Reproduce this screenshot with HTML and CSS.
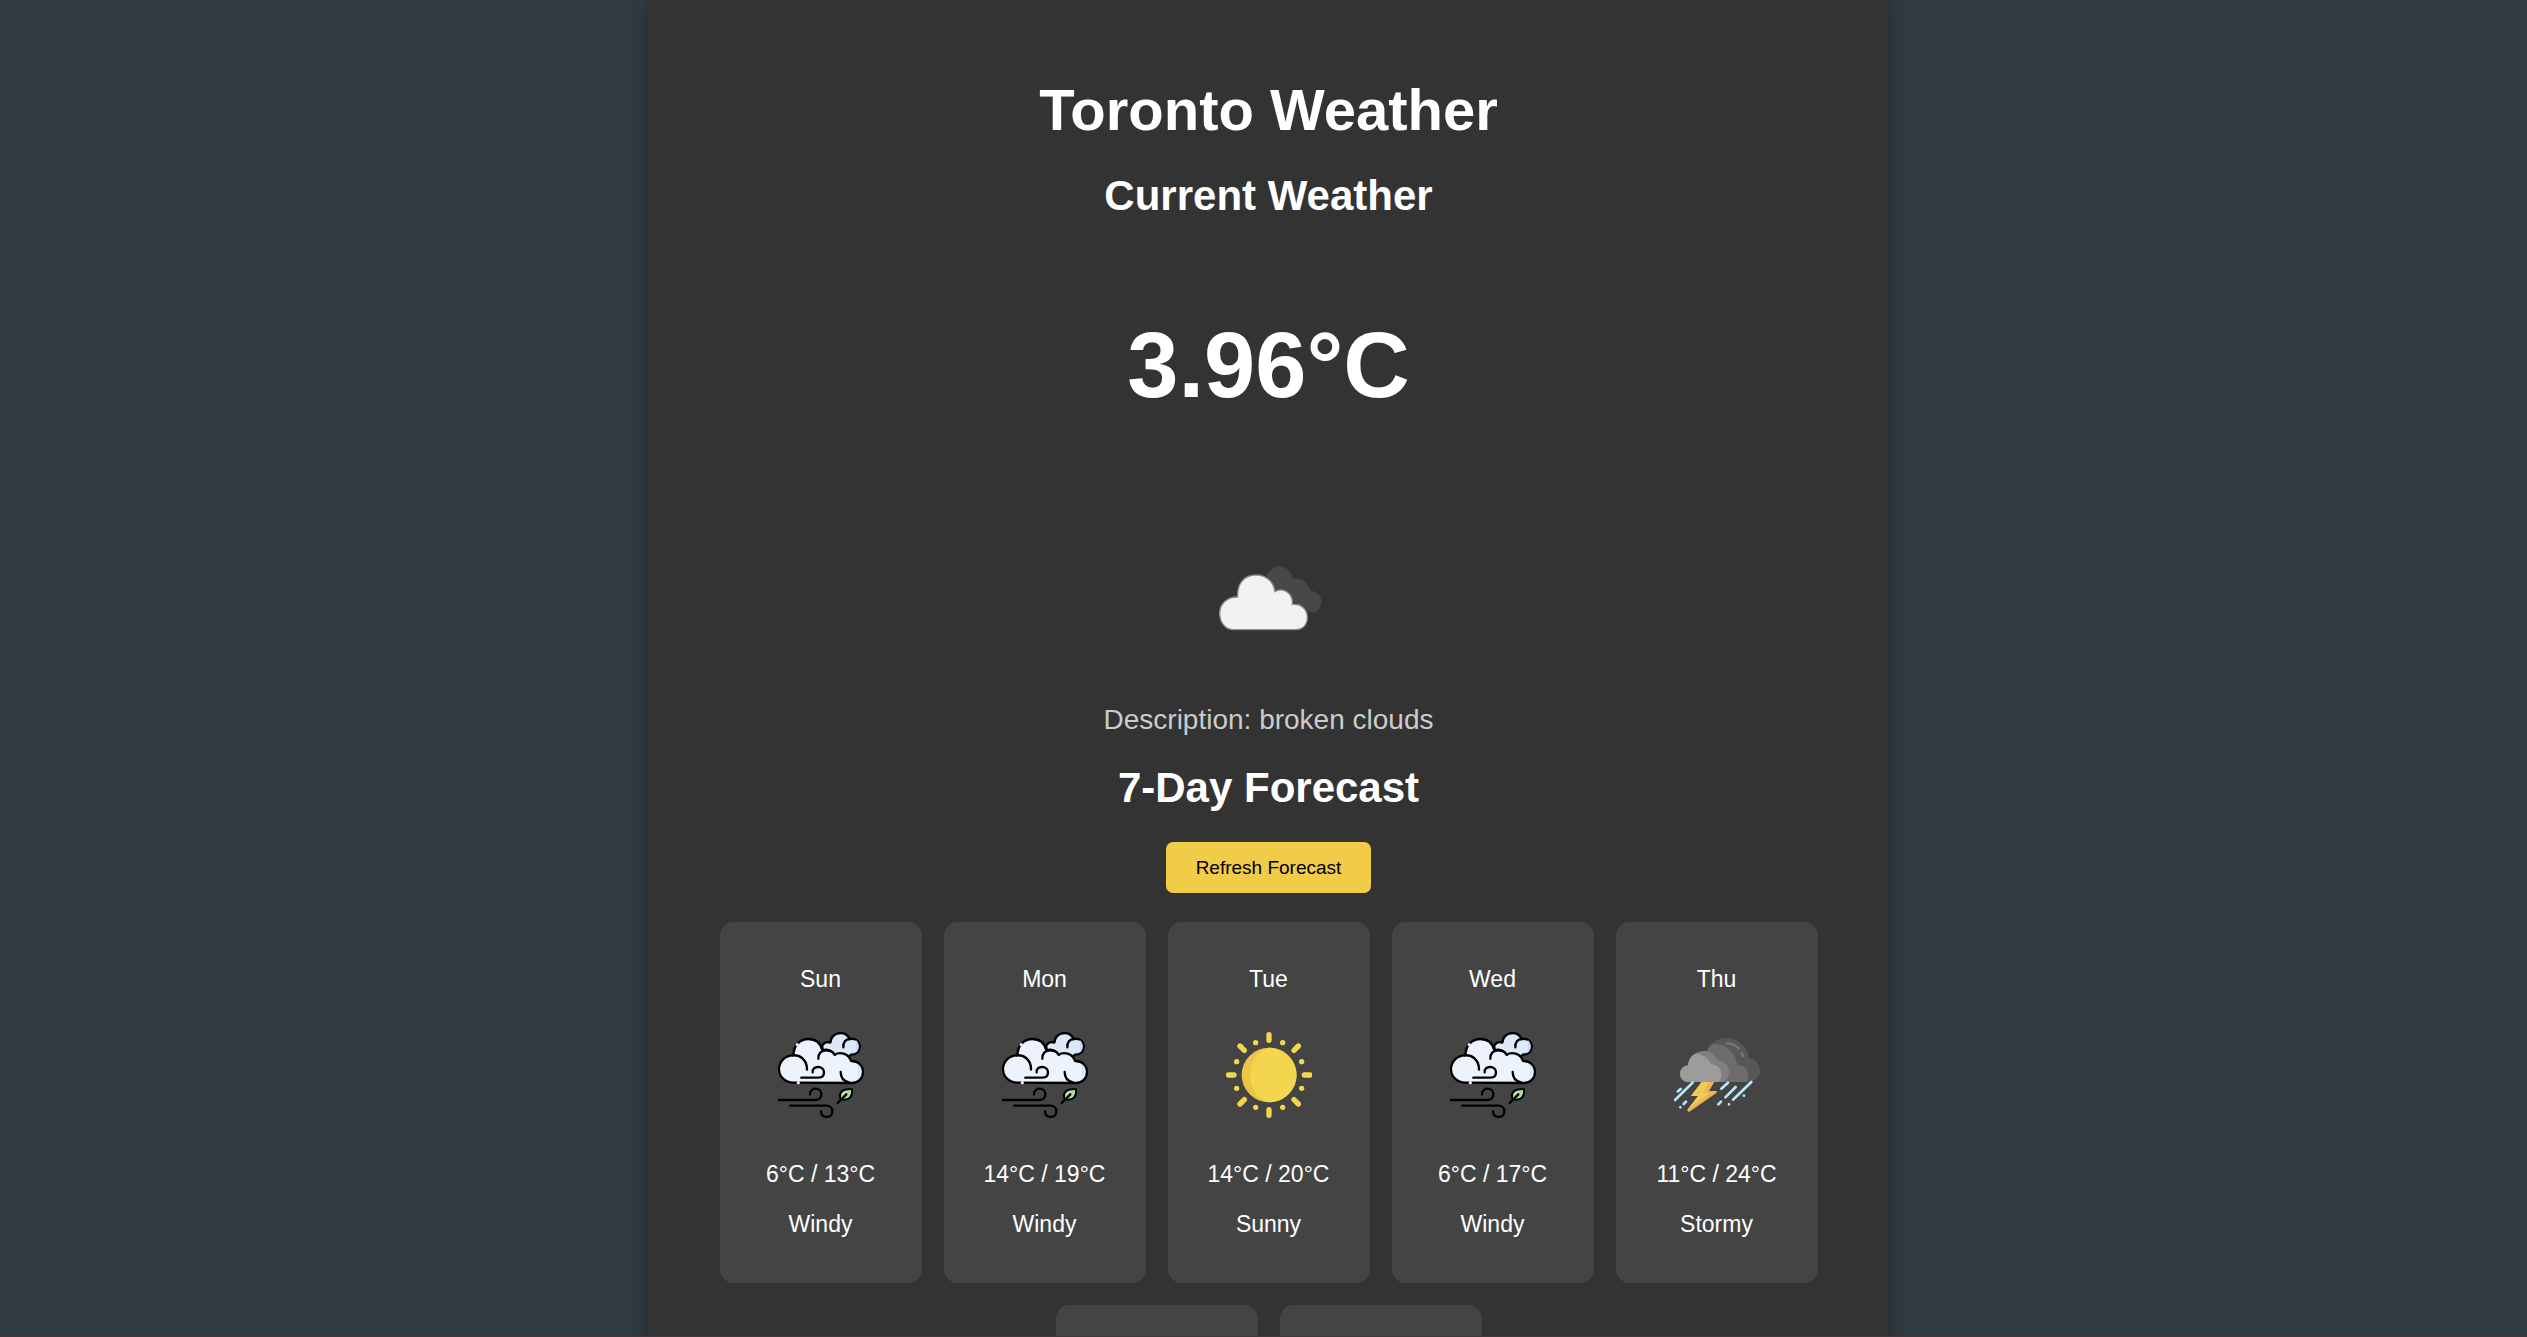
FILE: index.html
```
<!DOCTYPE html>
<html lang="en">
<head>
    <meta charset="UTF-8">
    <meta name="viewport" content="width=device-width, initial-scale=1.0">
    <title>Toronto Weather</title>
    <link rel="stylesheet" href="styles.css">
</head>
<body>
    <!-- Icon definitions -->
    <svg class="icon-defs" aria-hidden="true">
        <symbol id="icon-windy" viewBox="84 63 258 258">
            <g stroke="#000" stroke-width="7" stroke-linecap="round" stroke-linejoin="round" fill="none">
                <path fill="#dfe8f8" d="M216 107C219 95 230 91 241 95C243 76 257 66 271 66C285 66 294 73 299 84C316 80 329 92 329 107C329 122 317 131 303 131L280 150H230Z"/>
                <path stroke="none" fill="#c4d6f8" d="M316 86C330 95 330 118 315 127C321 113 321 100 316 86Z"/>
                <path d="M280 109C279 94 287 84 300 84"/>
                <path fill="#ecf3fe" d="M130 215C105 215 87 197 87 174C87 151 105 133 130 133C131 103 150 84 175 84C197 84 212 97 217 118C231 113 247 119 254 131C272 120 297 130 303 150C323 149 339 163 339 183C339 203 325 215 306 216Z"/>
                <path stroke="none" fill="#d5e2fa" d="M318 156C336 166 337 199 318 209C329 193 329 173 318 156Z"/>
                <path d="M128 133C154 131 172 151 171 176"/>
                <path d="M205 143C205 127 214 118 229 118C241 118 249 122 254 131"/>
                <path d="M272 183C272 199 281 211 297 214"/>
                <path d="M188 184C187 174 194 168 204 168C215 168 222 175 222 184C222 194 216 200 206 200H154"/>
                <path d="M87 267H197C208 267 214 259 214 250C214 240 207 233 197 233C187 233 180 240 180 250"/>
                <path d="M121 284H230C240 284 247 291 247 301C247 311 240 318 230 318C220 318 213 311 213 301"/>
                <path fill="#b4dc9b" stroke-width="6" d="M272 265C265 244 276 233 306 234C308 257 299 270 272 265Z"/>
                <path d="M263 276L289 250"/>
            </g>
            <g fill="#ecf3fe">
                <circle cx="142" cy="101" r="5"/>
                <circle cx="145" cy="215" r="5"/>
            </g>
        </symbol>
        <symbol id="icon-sunny" viewBox="76 63 258 258">
            <circle cx="205" cy="192" r="82" fill="#ecc546"/>
            <path fill="#f3d64d" d="M205 110C250 110 288 147 288 192C288 237 250 274 205 274C173 268 149 234 149 192C149 150 173 116 205 110Z"/>
            <g stroke="#f3d64d" stroke-width="16" stroke-linecap="round">
                <path d="M205 71V88M205 296V313M83 192H100M311 192H328M118 105L131 118M280 266L293 279M118 279L131 266M280 118L293 105"/>
                <path d="M165 95V95.010M246 95V95.010M108 152V152.010M303 152V152.010M108 232V232.010M303 232V232.010M165 289V289.010M246 289V289.010"/>
            </g>
        </symbol>
        <symbol id="icon-stormy" viewBox="69 63 258 258">
            <path fill="#575757" d="M168 115C180 93 202 81 226 81C260 81 290 106 294 142C313 144 327 159 327 178C327 198 312 213 292 213H180Z"/>
            <path fill="#6d6d6d" d="M168 119C174 107 184 99 196 99C231 102 254 127 258 161C278 161 292 176 292 193C292 201 290 208 285 213H180Z"/>
            <path fill="#828180" d="M129 131C139 123 149 120 160 120C178 120 192 132 198 148C219 149 234 164 234 183C234 196 227 207 217 213H150Z"/>
            <path fill="#9d9c9b" d="M112 213C97 213 87 203 87 188C87 174 98 163 111 163C112 146 120 134 133 128C157 129 175 143 180 160C199 161 211 173 211 190C211 199 209 207 203 213Z"/>
            <path stroke="#777" stroke-width="7" stroke-linecap="round" fill="none" d="M226 97C242 97 254 103 264 113M272 126L276 135"/>
            <path fill="#edb552" d="M152 213H190L174 240H199L195 247L114 303L108 298L141 255H120Z"/>
            <path fill="#f2cb55" d="M152 213H174L155 246H176L109 297L141 255H120Z"/>
            <g stroke="#b4e9fb" stroke-width="8" stroke-linecap="round">
                <path d="M72 267L125 215M81 241L89 234M98 279L105 272M88 289V289.010"/>
                <path d="M211 233L231 215M223 259L254 228M246 266L301 213M202 280L210 272M234 280V280.010M279 254V254.010"/>
            </g>
        </symbol>
        <symbol id="icon-broken-clouds" viewBox="49 -12 432 432">
            <path fill="#48484a" d="M258 136C267 119 279 109 296 109C315 109 330 123 337 146C361 142 384 157 388 182C407 183 422 196 422 215C422 234 410 247 394 248L340 215L285 180Z"/>
            <path fill="#f2f2f2" stroke="#8c8c8c" stroke-width="4" d="M155 299C132 297 117 275 117 250C117 222 140 200 171 201C169 160 191 135 226 135C256 135 279 155 283 185C307 170 338 190 335 223C361 220 380 238 380 262C380 284 367 298 346 299Z"/>
        </symbol>
    </svg>

    <div class="container">
        <h1>Toronto Weather</h1>

        <!-- Current weather -->
        <section class="current-weather">
            <h2>Current Weather</h2>
            <p class="temperature">3.96°C</p>
            <svg class="current-icon" role="img" aria-label="broken clouds"><use href="#icon-broken-clouds"/></svg>
            <p class="description">Description: broken clouds</p>
        </section>

        <!-- Forecast -->
        <section class="forecast">
            <h2>7-Day Forecast</h2>
            <button type="button" class="refresh-btn">Refresh Forecast</button>
            <div class="forecast-container">
                <div class="forecast-card">
                    <p>Sun</p>
                    <svg class="forecast-icon" role="img" aria-label="Windy"><use href="#icon-windy"/></svg>
                    <p>6°C / 13°C</p>
                    <p class="condition">Windy</p>
                </div>
                <div class="forecast-card">
                    <p>Mon</p>
                    <svg class="forecast-icon" role="img" aria-label="Windy"><use href="#icon-windy"/></svg>
                    <p>14°C / 19°C</p>
                    <p class="condition">Windy</p>
                </div>
                <div class="forecast-card">
                    <p>Tue</p>
                    <svg class="forecast-icon" role="img" aria-label="Sunny"><use href="#icon-sunny"/></svg>
                    <p>14°C / 20°C</p>
                    <p class="condition">Sunny</p>
                </div>
                <div class="forecast-card">
                    <p>Wed</p>
                    <svg class="forecast-icon" role="img" aria-label="Windy"><use href="#icon-windy"/></svg>
                    <p>6°C / 17°C</p>
                    <p class="condition">Windy</p>
                </div>
                <div class="forecast-card">
                    <p>Thu</p>
                    <svg class="forecast-icon" role="img" aria-label="Stormy"><use href="#icon-stormy"/></svg>
                    <p>11°C / 24°C</p>
                    <p class="condition">Stormy</p>
                </div>
                <div class="forecast-card"></div>
                <div class="forecast-card"></div>
            </div>
        </section>
    </div>
</body>
</html>
```
FILE: styles.css
```
:root {
    --page-color: #303a41;
    --panel-color: #333;
    --card-color: #444;
    --accent-color: #f0cc48;
}
* {
    box-sizing: border-box;
}
body {
    font-family: Arial, "Liberation Sans", sans-serif;
    background: var(--page-color);
    color: white;
    margin: 0;
    padding-left: 10px;
    text-align: center;
}
/* thin line along the bottom of the window */
body::after {
    content: "";
    position: fixed;
    left: 0;
    right: 0;
    bottom: 0;
    height: 1px;
    background: #40393f;
}
.icon-defs {
    display: none;
}
.container {
    max-width: 1241px;
    margin: -4px auto 0;
    padding: 80px 71px 58px;
    background: var(--panel-color);
    border-radius: 14px;
    box-shadow: 0 6px 16px rgba(0, 0, 0, 0.3);
}
h1, h2, p {
    margin: 0;
}
h1 {
    font-size: 58px;
    line-height: 68px;
    margin-bottom: 28px;
}
h2 {
    font-size: 42px;
    line-height: 48px;
    margin-bottom: 30px;
}
.temperature {
    font-size: 92px;
    font-weight: bold;
    line-height: 106px;
    margin: 92px 0 108px;
}
.current-icon {
    display: block;
    width: 144px;
    height: 144px;
    margin: 0 auto 34px;
}
.description {
    font-size: 28px;
    line-height: 32px;
    color: #ccc;
    margin-bottom: 28px;
}
.refresh-btn {
    display: block;
    margin: 0 auto 29px;
    padding: 14px 30px;
    border: none;
    border-radius: 7px;
    background: var(--accent-color);
    color: black;
    font-family: inherit;
    font-size: 19px;
    line-height: 23px;
    cursor: pointer;
}
.forecast-container {
    display: flex;
    flex-wrap: wrap;
    justify-content: center;
    gap: 22px;
}
.forecast-card {
    width: 202px;
    min-height: 361px;
    padding: 44px 20px;
    background: var(--card-color);
    border-radius: 14px;
    font-size: 23px;
    line-height: 26px;
}
.forecast-icon {
    display: block;
    width: 86px;
    height: 86px;
    margin: 40px auto 43px;
}
.condition {
    margin-top: 24px;
}
```
